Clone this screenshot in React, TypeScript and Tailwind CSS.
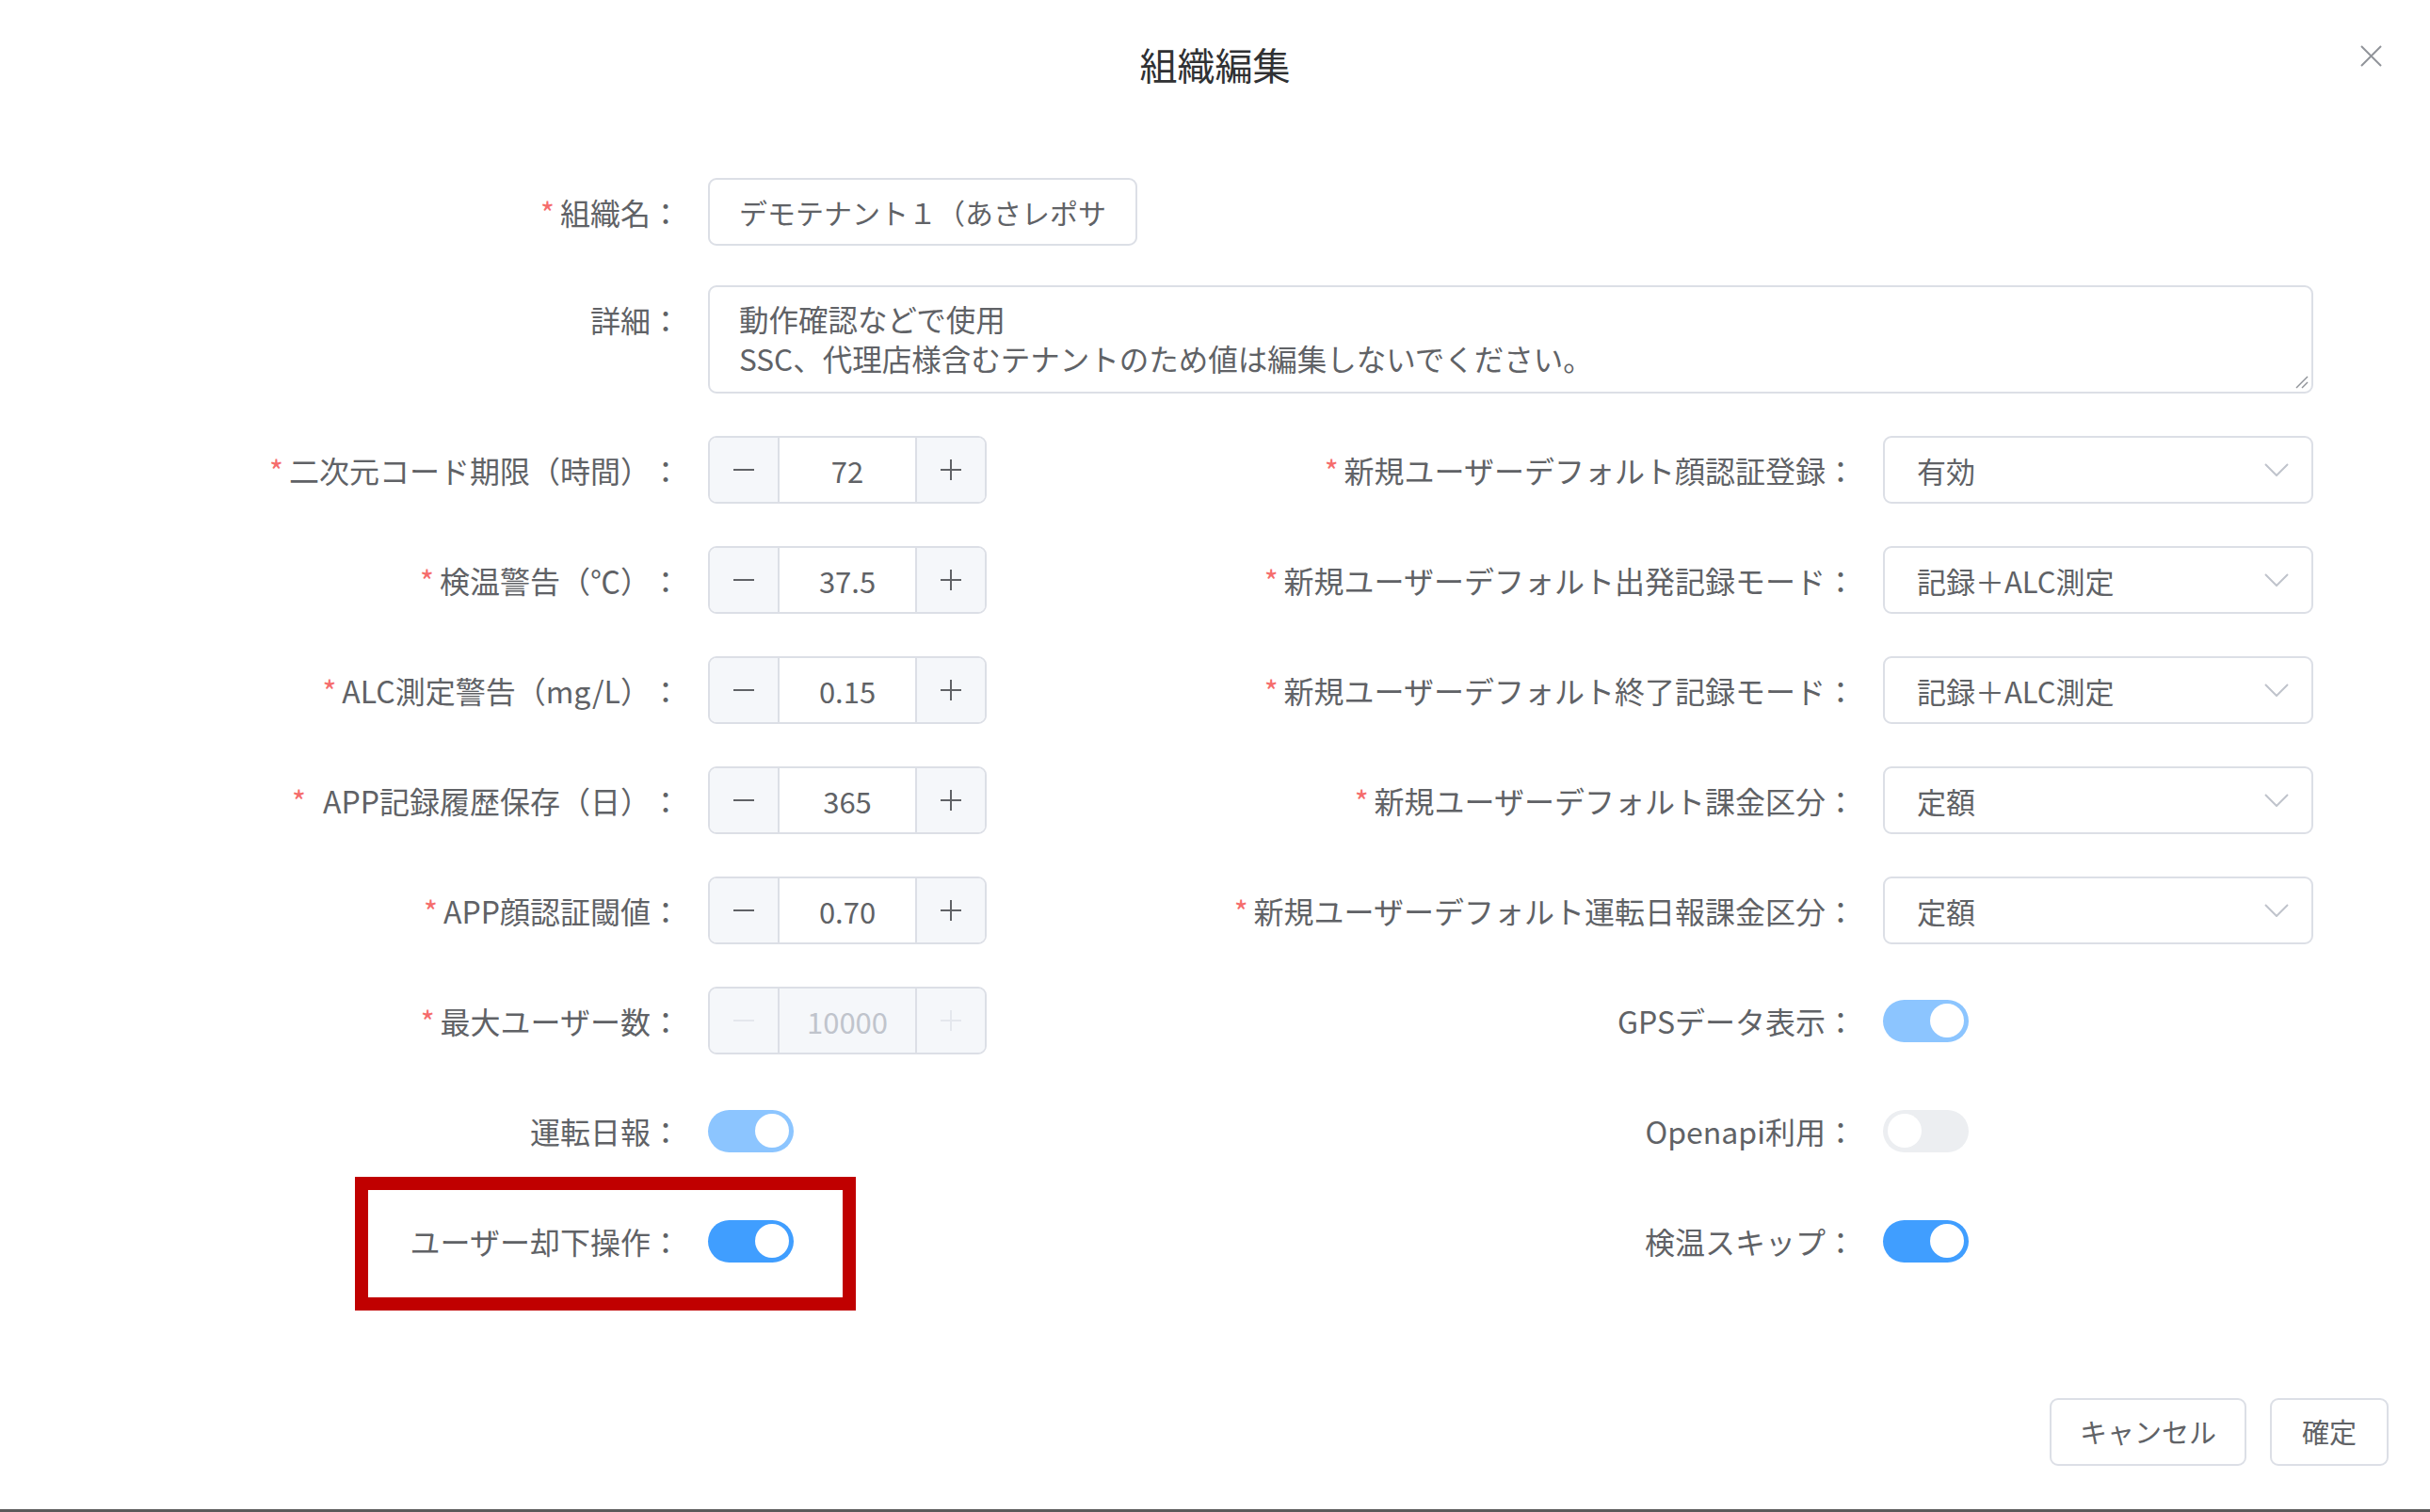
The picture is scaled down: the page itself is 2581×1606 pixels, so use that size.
import React from "react";

type Ctrl =
  | { kind: "num"; value: string; disabled?: boolean }
  | { kind: "select"; value: string }
  | { kind: "switch"; on: boolean; disabled?: boolean };

type Field = { label: string; req?: boolean; spaced?: boolean; ctrl: Ctrl };

const rows: [Field, Field][] = [
  [
    { label: "二次元コード期限（時間）", req: true, ctrl: { kind: "num", value: "72" } },
    { label: "新規ユーザーデフォルト顔認証登録", req: true, ctrl: { kind: "select", value: "有効" } },
  ],
  [
    { label: "検温警告（℃）", req: true, ctrl: { kind: "num", value: "37.5" } },
    { label: "新規ユーザーデフォルト出発記録モード", req: true, ctrl: { kind: "select", value: "記録＋ALC測定" } },
  ],
  [
    { label: "ALC測定警告（mg/L）", req: true, ctrl: { kind: "num", value: "0.15" } },
    { label: "新規ユーザーデフォルト終了記録モード", req: true, ctrl: { kind: "select", value: "記録＋ALC測定" } },
  ],
  [
    { label: "APP記録履歴保存（日）", req: true, spaced: true, ctrl: { kind: "num", value: "365" } },
    { label: "新規ユーザーデフォルト課金区分", req: true, ctrl: { kind: "select", value: "定額" } },
  ],
  [
    { label: "APP顔認証閾値", req: true, ctrl: { kind: "num", value: "0.70" } },
    { label: "新規ユーザーデフォルト運転日報課金区分", req: true, ctrl: { kind: "select", value: "定額" } },
  ],
  [
    { label: "最大ユーザー数", req: true, ctrl: { kind: "num", value: "10000", disabled: true } },
    { label: "GPSデータ表示", ctrl: { kind: "switch", on: true, disabled: true } },
  ],
  [
    { label: "運転日報", ctrl: { kind: "switch", on: true, disabled: true } },
    { label: "Openapi利用", ctrl: { kind: "switch", on: false, disabled: true } },
  ],
  [
    { label: "ユーザー却下操作", ctrl: { kind: "switch", on: true } },
    { label: "検温スキップ", ctrl: { kind: "switch", on: true } },
  ],
];

function Label({ label, req, spaced }: { label: string; req?: boolean; spaced?: boolean }) {
  return (
    <div className="h-[72px] flex items-center justify-end pr-[29px] text-[32px] text-[#606266] whitespace-nowrap">
      {req && <span className={"text-[#f56c6c] " + (spaced ? "mr-[18px]" : "mr-[6px]")}>*</span>}
      <span>{label}：</span>
    </div>
  );
}

function MinusIcon({ color }: { color: string }) {
  return (
    <svg width="22" height="22" viewBox="0 0 22 22">
      <line x1="0" y1="11" x2="22" y2="11" stroke={color} strokeWidth="2" />
    </svg>
  );
}
function PlusIcon({ color }: { color: string }) {
  return (
    <svg width="22" height="22" viewBox="0 0 22 22">
      <line x1="0" y1="11" x2="22" y2="11" stroke={color} strokeWidth="2" />
      <line x1="11" y1="0" x2="11" y2="22" stroke={color} strokeWidth="2" />
    </svg>
  );
}

function NumInput({ value, disabled }: { value: string; disabled?: boolean }) {
  const ic = disabled ? "#e4e7ed" : "#606266";
  return (
    <div
      className={
        "w-[296px] h-[72px] flex rounded-[9px] border-2 border-[#dcdfe6] overflow-hidden " +
        (disabled ? "bg-[#f5f7fa]" : "bg-white")
      }
    >
      <div className="w-[74px] flex items-center justify-center bg-[#f5f7fa] border-r-2 border-[#dcdfe6]">
        <MinusIcon color={ic} />
      </div>
      <div
        className={
          "flex-1 flex items-center justify-center text-[31px] " +
          (disabled ? "text-[#c0c4cc]" : "text-[#606266]")
        }
      >
        {value}
      </div>
      <div className="w-[74px] flex items-center justify-center bg-[#f5f7fa] border-l-2 border-[#dcdfe6]">
        <PlusIcon color={ic} />
      </div>
    </div>
  );
}

function Select({ value }: { value: string }) {
  return (
    <div className="w-[457px] h-[72px] flex items-center justify-between rounded-[9px] border-2 border-[#dcdfe6] pl-[34px] pr-[24px] text-[31px] text-[#606266]">
      <span>{value}</span>
      <svg width="26" height="14" viewBox="0 0 26 14">
        <polyline points="1,1 13,13 25,1" fill="none" stroke="#c0c4cc" strokeWidth="2" />
      </svg>
    </div>
  );
}

function Switch({ on, disabled }: { on: boolean; disabled?: boolean }) {
  let track = "bg-[#409eff]";
  if (on && disabled) track = "bg-[#8cc5ff]";
  if (!on) track = "bg-[#eceef1]";
  return (
    <div className={"w-[91px] h-[45px] rounded-full flex items-center px-[5px] " + track + (on ? " justify-end" : " justify-start")}>
      <div className="w-[36px] h-[36px] rounded-full bg-white" />
    </div>
  );
}

function Control({ ctrl }: { ctrl: Ctrl }) {
  if (ctrl.kind === "num") return <NumInput value={ctrl.value} disabled={ctrl.disabled} />;
  if (ctrl.kind === "select") return <Select value={ctrl.value} />;
  return <Switch on={ctrl.on} disabled={ctrl.disabled} />;
}

export default function App() {
  return (
    <div className="relative w-[2581px] h-[1606px] bg-white overflow-hidden border-b-[3px] border-[#5a5a5a] font-['Noto_Sans_CJK_JP','Noto_Sans',sans-serif] [text-spacing-trim:space-all]">
      {/* header */}
      <div className="h-[138px] grid grid-cols-[1fr_auto_1fr] items-start pt-[48px]">
        <div />
        <div className="text-[40px] leading-[40px] text-[#303133]">組織編集</div>
        <div className="flex justify-end pr-[51px]">
          <svg width="23" height="23" viewBox="0 0 23 23">
            <line x1="1" y1="1" x2="22" y2="22" stroke="#909399" strokeWidth="2" />
            <line x1="22" y1="1" x2="1" y2="22" stroke="#909399" strokeWidth="2" />
          </svg>
        </div>
      </div>

      {/* form */}
      <div className="mt-[51px] flex flex-col leading-none">
        <div className="grid grid-cols-[752px_496px_752px_457px] items-center h-[72px] mb-[42px]">
          <Label label="組織名" req />
          <div className="w-[456px] h-[72px] rounded-[9px] border-2 border-[#dcdfe6] pl-[31px] flex items-center overflow-hidden whitespace-nowrap text-[30px] text-[#606266]">
            デモテナント１（あさレポサ
          </div>
        </div>

        <div className="grid grid-cols-[752px_496px_752px_457px] items-start mb-[45px]">
          <Label label="詳細" />
          <div className="col-span-3 relative h-[115px] rounded-[9px] border-2 border-[#dcdfe6] pl-[31px] pt-[12px] text-[31.5px] leading-[42px] text-[#606266]">
            <div>動作確認などで使用</div>
            <div>SSC、代理店様含むテナントのため値は編集しないでください。</div>
            <svg className="absolute right-[3px] bottom-[3px]" width="16" height="16" viewBox="0 0 16 16">
              <line x1="15" y1="3" x2="3" y2="15" stroke="#909399" strokeWidth="1.5" />
              <line x1="15" y1="9" x2="9" y2="15" stroke="#909399" strokeWidth="1.5" />
            </svg>
          </div>
        </div>

        <div className="flex flex-col gap-[45px]">
          {rows.map(([l, r], i) => (
            <div key={i} className="grid grid-cols-[752px_496px_752px_457px] items-center h-[72px]">
              <Label label={l.label} req={l.req} spaced={l.spaced} />
              <div className="flex items-center">
                <Control ctrl={l.ctrl} />
              </div>
              <Label label={r.label} req={r.req} spaced={r.spaced} />
              <div className="flex items-center">
                <Control ctrl={r.ctrl} />
              </div>
            </div>
          ))}
        </div>
      </div>

      {/* footer */}
      <div className="mt-[131px] flex justify-end gap-[25px] pr-[44px]">
        <button className="w-[209px] h-[72px] rounded-[9px] border-2 border-[#dcdfe6] bg-white text-[29px] text-[#606266] flex items-center justify-center">
          キャンセル
        </button>
        <button className="w-[126px] h-[72px] rounded-[9px] border-2 border-[#dcdfe6] bg-white text-[29px] text-[#606266] flex items-center justify-center">
          確定
        </button>
      </div>

      {/* annotation */}
      <div className="absolute left-[377px] top-[1250px] w-[532px] h-[142px] border-[14px] border-[#c00000]" />
    </div>
  );
}
